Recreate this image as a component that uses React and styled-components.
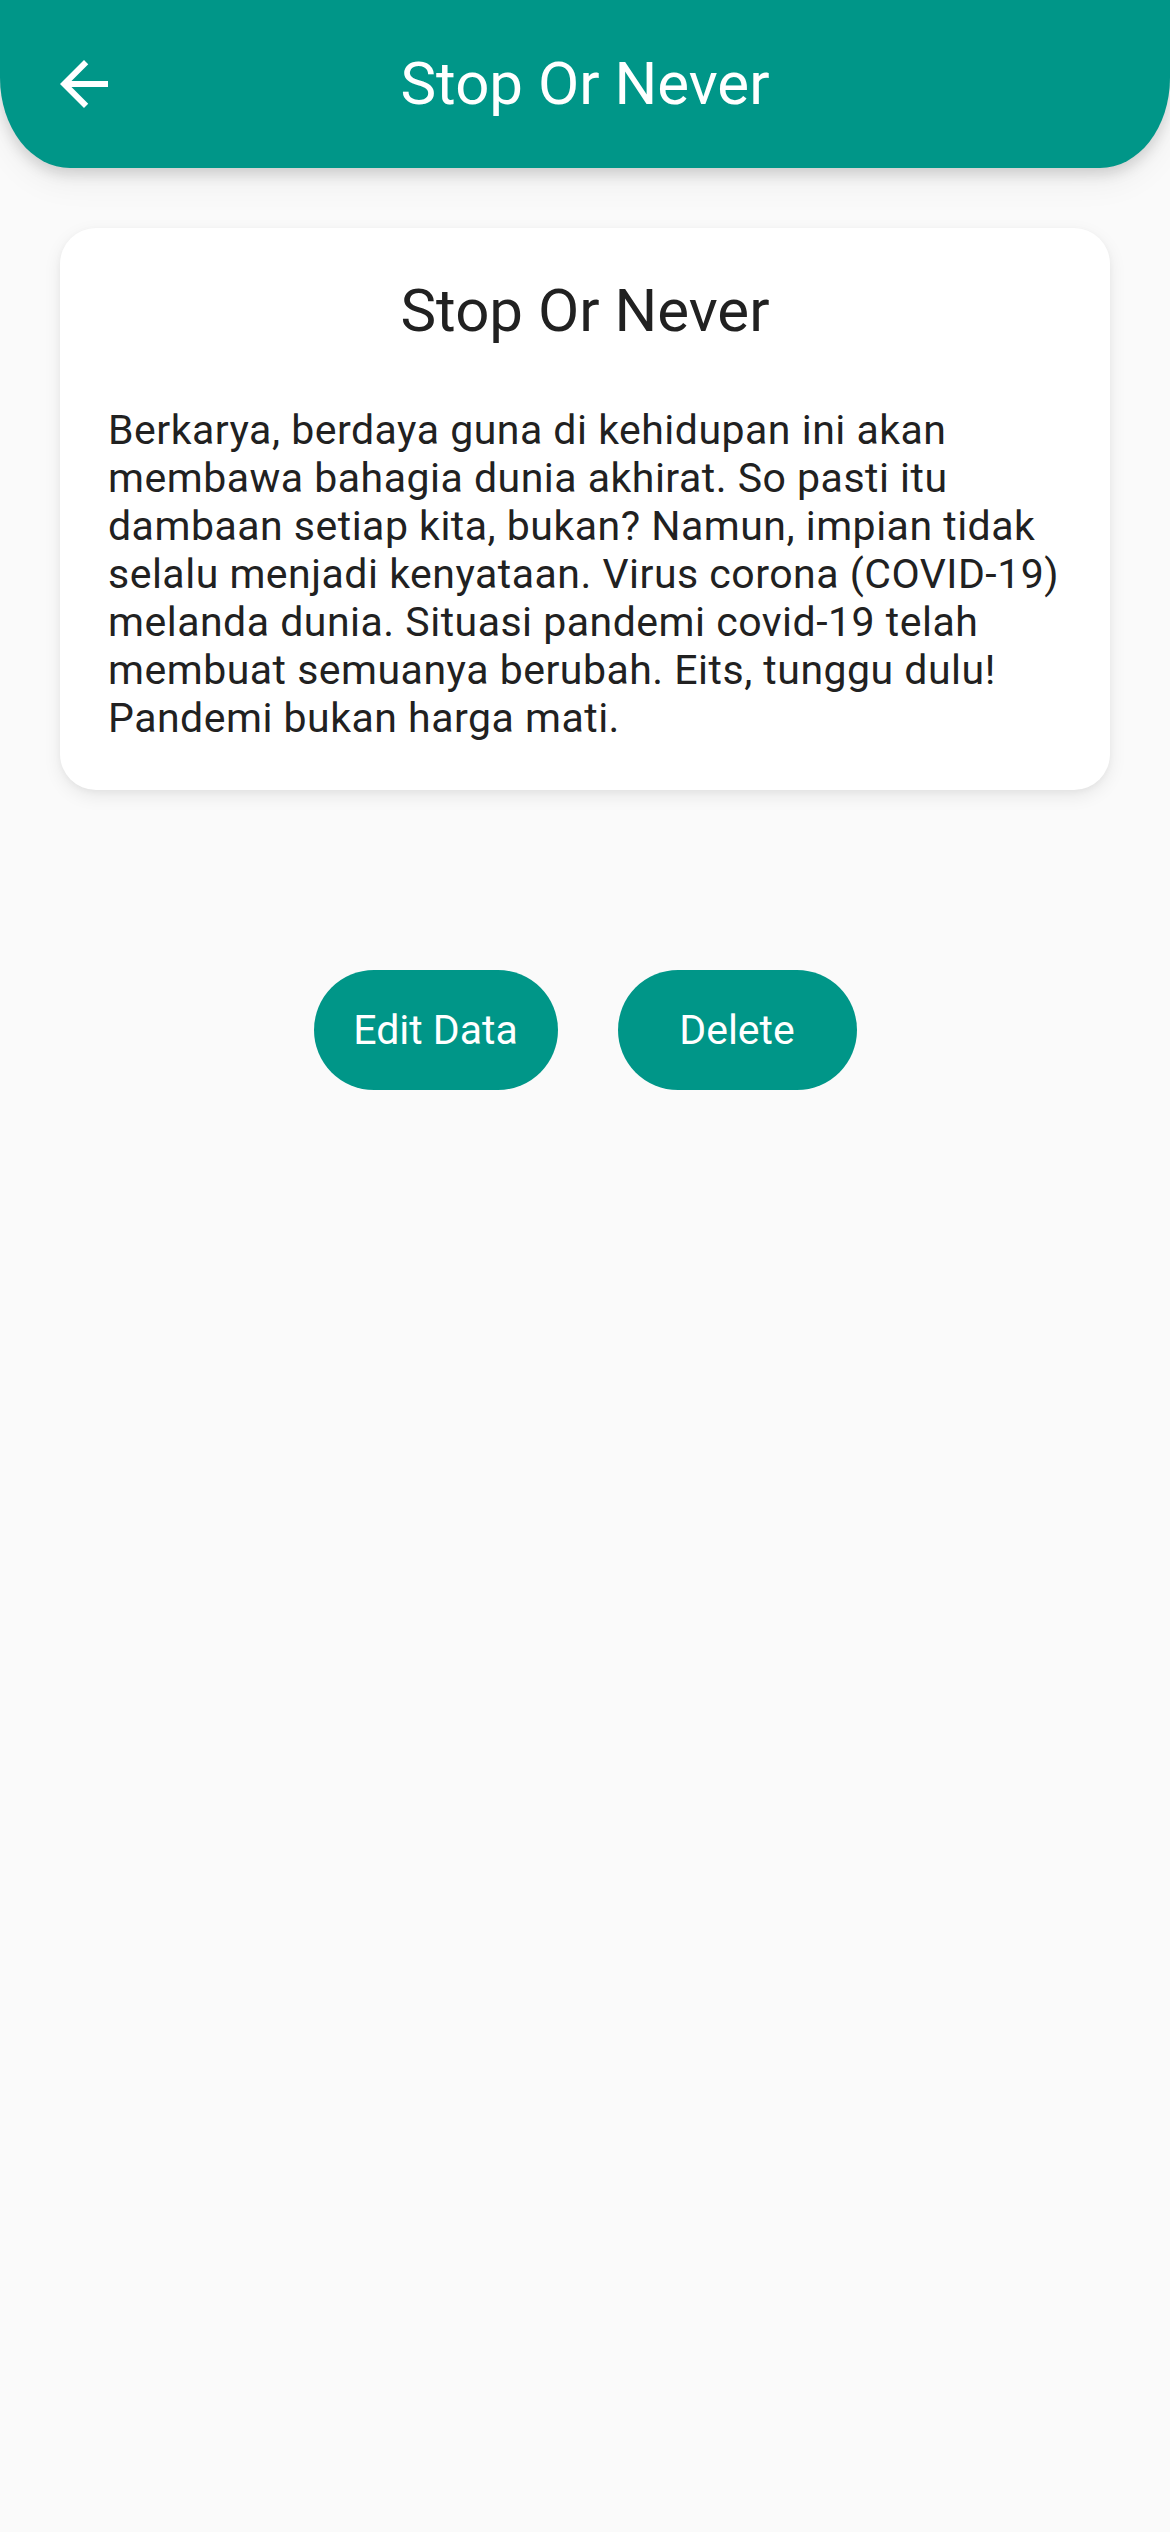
import React from "react";
import styled, { createGlobalStyle } from "styled-components";

const GlobalStyle = createGlobalStyle`
  * { box-sizing: border-box; }
  html, body {
    margin: 0;
    padding: 0;
    background: #fafafa;
    font-family: Roboto, "Noto Sans", "Liberation Sans", sans-serif;
  }
`;

const teal = "#009688";

function BackArrow() {
    return (
        <svg width="72" height="72" viewBox="0 0 24 24" fill="#ffffff">
            <path d="M20 11H7.83l5.59-5.59L12 4l-8 8 8 8 1.41-1.41L7.83 13H20v-2z" />
        </svg>
    );
}

function App() {
    return (
        <>
            <GlobalStyle />
            <Page>
                <AppBar>
                    <IconButton aria-label="back">
                        <BackArrow />
                    </IconButton>
                    <Title>Stop Or Never</Title>
                </AppBar>
                <Content>
                    <Card>
                        <CardTitle>Stop Or Never</CardTitle>
                        <CardBody>
                            Berkarya, berdaya guna di kehidupan ini akan membawa bahagia dunia akhirat.
                            So pasti itu dambaan setiap kita, bukan? Namun, impian tidak selalu menjadi
                            kenyataan. Virus corona (COVID-19) melanda dunia. Situasi pandemi covid-19
                            telah membuat semuanya berubah. Eits, tunggu dulu! Pandemi bukan harga mati.
                        </CardBody>
                    </Card>
                    <Actions>
                        <PillButton width={244}>Edit Data</PillButton>
                        <PillButton width={239}>Delete</PillButton>
                    </Actions>
                </Content>
            </Page>
        </>
    );
}

const Page = styled.div`
    min-height: 2532px;
    background: #fafafa;
`;

const AppBar = styled.header`
    position: relative;
    height: 168px;
    background: ${teal};
    border-radius: 0 0 70px 70px / 0 0 90px 90px;
    display: flex;
    align-items: center;
    justify-content: center;
    box-shadow: 0 6px 14px rgba(0, 0, 0, 0.14), 0 14px 34px rgba(0, 0, 0, 0.06);
`;

const IconButton = styled.button`
    position: absolute;
    left: 48px;
    top: 48px;
    width: 72px;
    height: 72px;
    padding: 0;
    border: none;
    background: none;
    display: flex;
    svg { display: block; }
`;

const Title = styled.h1`
    margin: 0;
    color: #ffffff;
    font-size: 60px;
    font-weight: 400;
    line-height: 70px;
`;

const Content = styled.main`
    padding: 60px;
    display: flex;
    flex-direction: column;
    align-items: stretch;
`;

const Card = styled.section`
    background: #ffffff;
    border-radius: 36px;
    padding: 48px;
    box-shadow: 0 6px 18px rgba(0, 0, 0, 0.08), 0 2px 6px rgba(0, 0, 0, 0.04);
`;

const CardTitle = styled.h2`
    margin: 0 0 60px;
    text-align: center;
    color: #212121;
    font-size: 60px;
    font-weight: 400;
    line-height: 70px;
`;

const CardBody = styled.p`
    margin: 0;
    color: #212121;
    font-size: 41px;
    line-height: 48px;
    letter-spacing: 0.5px;
`;

const Actions = styled.div`
    margin-top: 180px;
    display: flex;
    justify-content: center;
    gap: 60px;
`;

const PillButton = styled.button`
    width: ${(p) => p.width}px;
    height: 120px;
    border: none;
    border-radius: 60px;
    background: ${teal};
    color: #ffffff;
    font-family: Roboto, "Noto Sans", "Liberation Sans", sans-serif;
    font-size: 41px;
    font-weight: 400;
    padding: 0;
`;

export default App;
